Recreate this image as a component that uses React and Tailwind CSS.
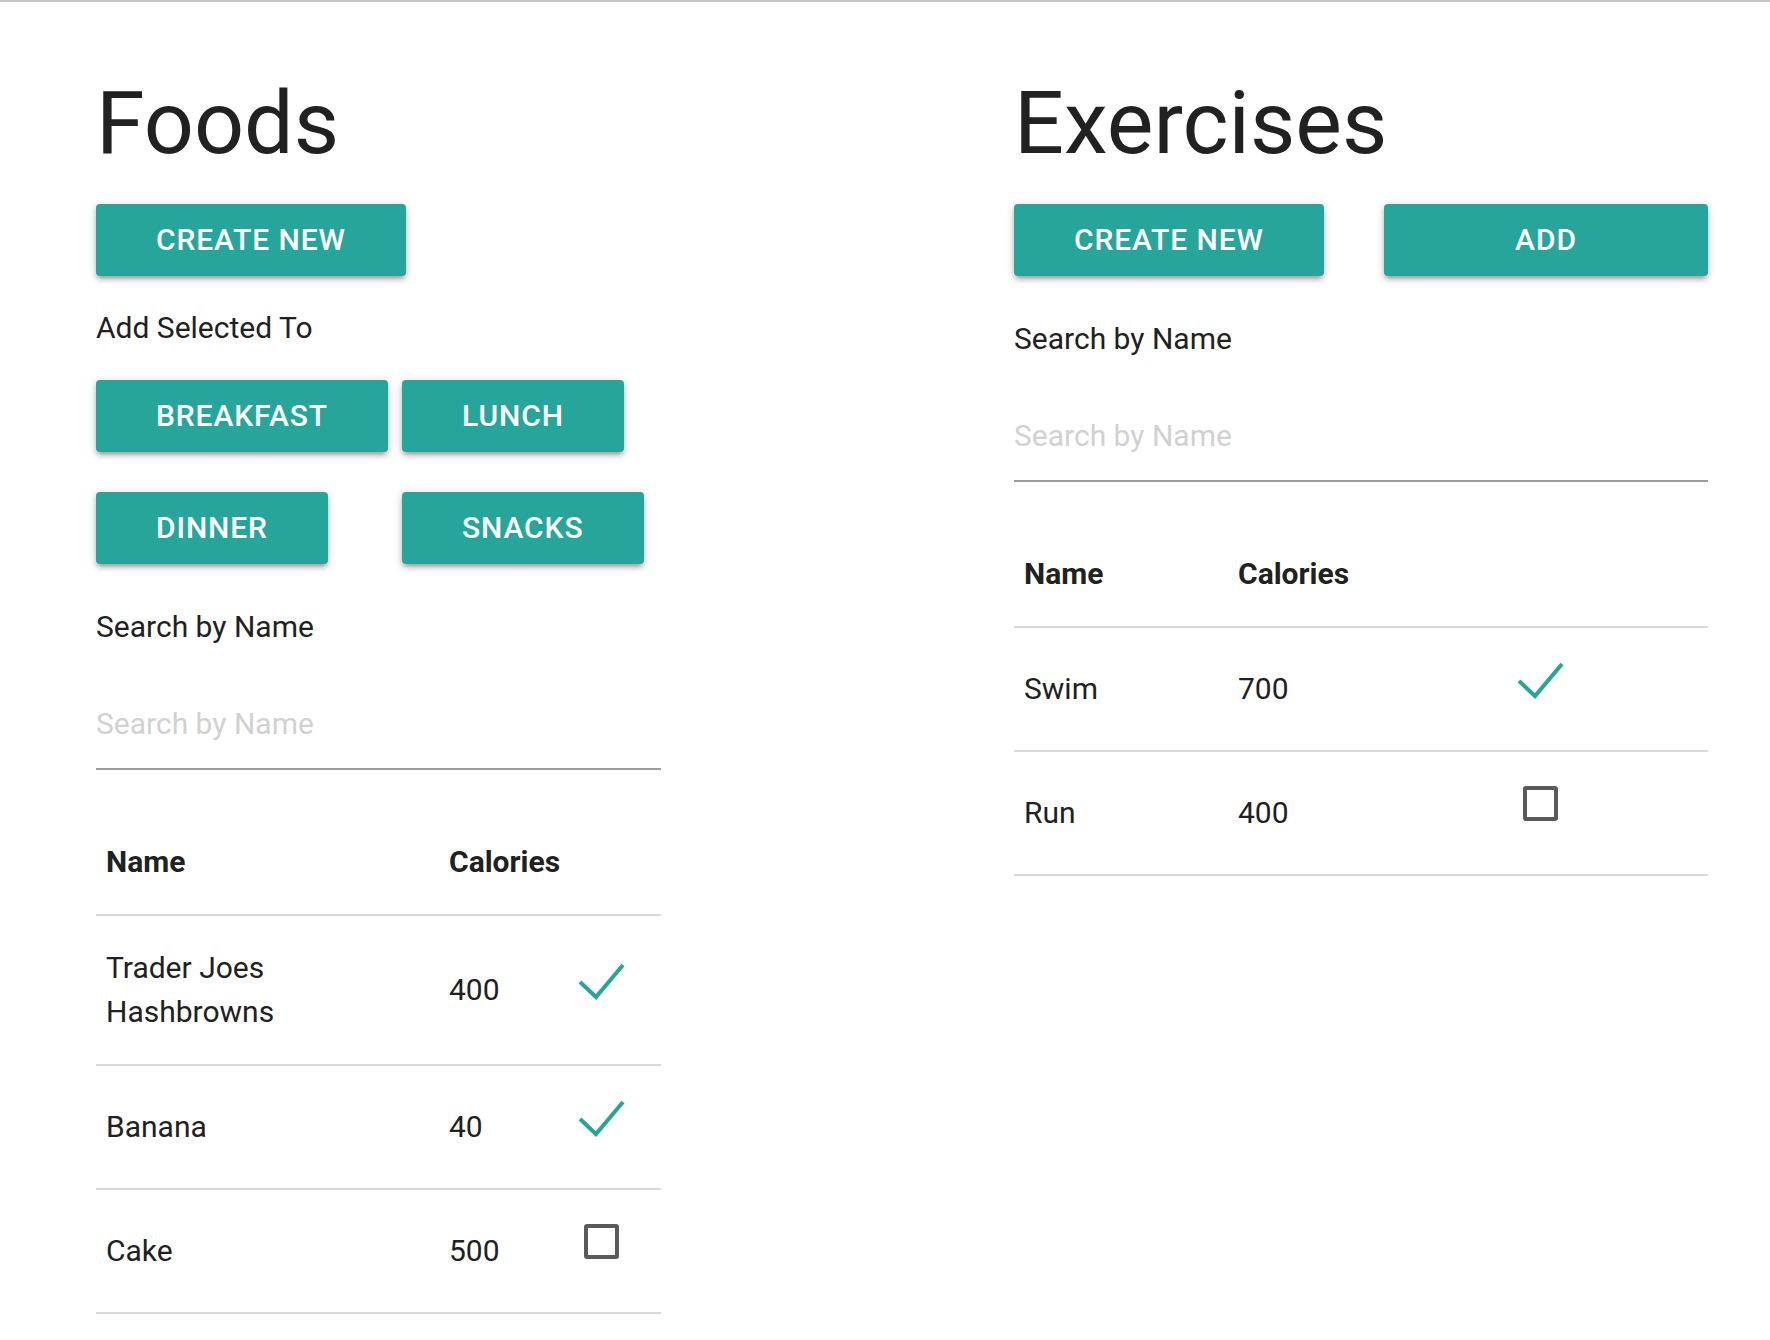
import React from 'react';

const btn =
  'inline-block h-[72px] leading-[72px] px-[60px] rounded-[4px] bg-[#26a69a] text-white text-[30px] font-medium tracking-[0.9px] uppercase text-center shadow-[0_4px_4px_0_rgba(0,0,0,0.14),0_6px_2px_-4px_rgba(0,0,0,0.12),0_2px_10px_0_rgba(0,0,0,0.2)]';

const Check = () => (
  <svg width="46" height="38" viewBox="0 0 46 38" className="block">
    <polyline points="1,19 17,34 44,2" fill="none" stroke="#26a69a" strokeWidth="4" />
  </svg>
);

const Box = () => <div className="ml-[5px] w-[35px] h-[35px] border-[4px] border-[#5a5a5a] rounded-[3px]" />;

const SelectCell = ({ checked }) => (
  <div className="h-[62px]">
    {checked ? (
      <div className="pt-[4px]">
        <Check />
      </div>
    ) : (
      <div className="pt-[4px]">
        <Box />
      </div>
    )}
  </div>
);

const Table = ({ rows, widths }) => (
  <table className="w-full table-fixed border-collapse mt-[40px] leading-[44px]">
    <colgroup>
      {widths.map((w, i) => (
        <col key={i} style={{ width: w }} />
      ))}
    </colgroup>
    <thead>
      <tr className="border-b-2 border-[#d9d9d9]">
        <th className="px-[10px] py-[30px] text-left font-bold">Name</th>
        <th className="px-[10px] py-[30px] text-left font-bold">Calories</th>
        <th></th>
      </tr>
    </thead>
    <tbody>
      {rows.map((r) => (
        <tr key={r.name} className="border-b-2 border-[#d9d9d9]">
          <td className="px-[10px] py-[30px] align-middle">{r.name}</td>
          <td className="px-[10px] py-[30px] align-middle">{r.cal}</td>
          <td className="px-[10px] py-[30px] align-middle">
            <SelectCell checked={r.checked} />
          </td>
        </tr>
      ))}
    </tbody>
  </table>
);

const SearchBox = () => (
  <>
    <div className="mt-[40px]">Search by Name</div>
    <input
      type="text"
      placeholder="Search by Name"
      className="mt-[29px] block w-full h-[92px] border-b-2 border-[#9e9e9e] bg-transparent text-[30px] outline-none placeholder:text-[#d1d1d1]"
    />
  </>
);

export default function App() {
  const foods = [
    { name: 'Trader Joes Hashbrowns', cal: 400, checked: true },
    { name: 'Banana', cal: 40, checked: true },
    { name: 'Cake', cal: 500, checked: false },
  ];
  const exercises = [
    { name: 'Swim', cal: 700, checked: true },
    { name: 'Run', cal: 400, checked: false },
  ];

  return (
    <div
      className="min-h-screen bg-white border-t-2 border-[#c4c4c4] text-[#212121] text-[30px] leading-[45px]"
      style={{ fontFamily: 'Roboto, "Open Sans", sans-serif' }}
    >
      <div className="flex pl-[96px] pt-[72px]">
        {/* Foods */}
        <div className="w-[565px]">
          <h3 className="text-[88px] leading-[97px] font-normal">Foods</h3>
          <div className="mt-[33px]">
            <button className={btn}>Create New</button>
          </div>
          <div className="mt-[29px]">Add Selected To</div>
          <div className="mt-[30px] grid grid-cols-[306px_auto] gap-y-[40px] justify-items-start">
            <button className={btn}>Breakfast</button>
            <button className={btn}>Lunch</button>
            <button className={btn}>Dinner</button>
            <button className={btn}>Snacks</button>
          </div>
          <SearchBox />
          <Table rows={foods} widths={['343px', '130px', '92px']} />
        </div>

        {/* Exercises */}
        <div className="w-[694px] ml-[353px]">
          <h3 className="text-[88px] leading-[97px] font-normal">Exercises</h3>
          <div className="mt-[33px] flex">
            <button className={btn}>Create New</button>
            <button className={`${btn} ml-auto w-[324px] px-0`}>Add</button>
          </div>
          <SearchBox />
          <Table rows={exercises} widths={['214px', '280px', '200px']} />
        </div>
      </div>
    </div>
  );
}
